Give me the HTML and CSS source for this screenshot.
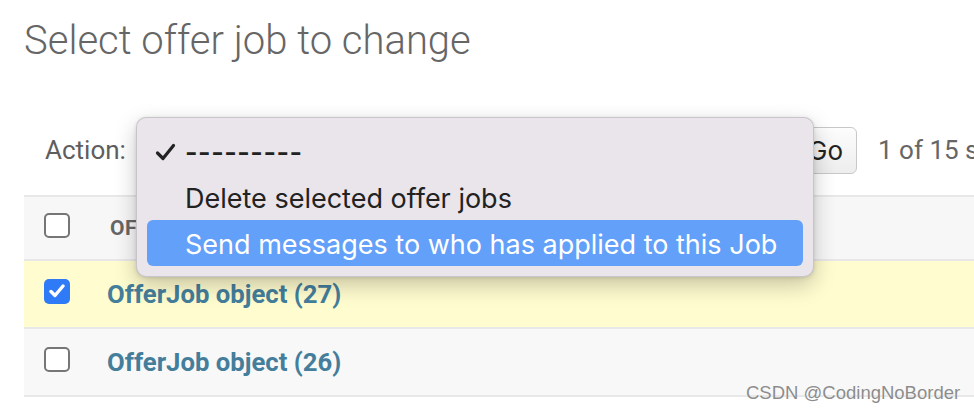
FILE: index.html
```html
<!DOCTYPE html>
<html>
<head>
<meta charset="utf-8">
<link rel="stylesheet" href="styles.css">
</head>
<body>
<div class="page">
  <h1 class="title">Select offer job to change</h1>
  <div class="actions">
    <span class="label">Action:</span>
    <div class="select-wrap">
      <div class="select"></div>
      <div class="menu">
        <div class="item"><svg class="tick" width="21" height="18" viewBox="0 0 21 18"><path d="M2.5 10 L8 15.5 L18.5 2.5" fill="none" stroke="#222" stroke-width="3.2" stroke-linecap="round" stroke-linejoin="round"/></svg><span class="dashes">---------</span></div>
        <div class="item">Delete selected offer jobs</div>
        <div class="item active">Send messages to who has applied to this Job</div>
      </div>
    </div>
    <button class="go">Go</button>
    <span class="counter">1 of 15 selected</span>
  </div>
  <div class="table">
    <div class="row head">
      <div class="cb-cell"><span class="cb"></span></div>
      <div class="col-title">OFFER JOB</div>
    </div>
    <div class="row selected">
      <div class="cb-cell"><span class="cb checked"><svg width="16" height="14" viewBox="0 0 16 14"><path d="M2 7.5 L6 11.5 L14 2" fill="none" stroke="#fff" stroke-width="3.4" stroke-linecap="round" stroke-linejoin="round"/></svg></span></div>
      <a class="link">OfferJob object (27)</a>
    </div>
    <div class="row alt">
      <div class="cb-cell"><span class="cb"></span></div>
      <a class="link">OfferJob object (26)</a>
    </div>
  </div>
</div>
<div class="watermark">CSDN @CodingNoBorder</div>
</body>
</html>
```

FILE: styles.css
```css
html, body {
  margin: 0;
  padding: 0;
  background: #fff;
  overflow: hidden;
}
body {
  width: 974px;
  height: 412px;
  position: relative;
  font-family: Roboto, "Liberation Sans", sans-serif;
}
.page {
  padding-left: 24px;
}
.title {
  margin: 17px 0 0 0;
  font-family: Roboto, sans-serif;
  font-weight: 300;
  font-size: 40px;
  line-height: 48px;
  color: #666;
  white-space: nowrap;
}
.actions {
  margin-top: 55px;
  height: 60px;
  display: flex;
  align-items: center;
  white-space: nowrap;
}
.actions > * {
  flex-shrink: 0;
}
.label {
  margin-left: 21px;
  width: 79px;
  font-size: 26px;
  color: #5e5e5e;
}
.select-wrap {
  position: relative;
  margin-left: 12px;
  width: 644px;
  height: 47px;
}
.select {
  height: 45px;
  border: 1px solid #ccc;
  border-radius: 6px;
  background: #fff;
}
.menu {
  position: absolute;
  left: 0;
  top: -10px;
  width: 656px;
  padding: 10px;
  background: #e9e5ea;
  border: 1px solid rgba(0, 0, 0, 0.14);
  border-radius: 10px;
  box-shadow: 0 8px 22px rgba(0, 0, 0, 0.22), 0 1px 4px rgba(0, 0, 0, 0.12);
  z-index: 5;
  font-family: Inter, sans-serif;
  font-size: 27px;
  color: #222;
}
.item {
  height: 46px;
  line-height: 49px;
  padding-left: 38px;
  border-radius: 6px;
  position: relative;
  white-space: nowrap;
}
.item.active {
  background: #63a0f9;
  color: #fff;
}
.tick {
  position: absolute;
  left: 8px;
  top: 15px;
}
.dashes {
  letter-spacing: 0.5px;
  font-weight: 600;
}
.go {
  margin-left: 11px;
  width: 66px;
  height: 47px;
  border: 1px solid #c8c8c8;
  border-radius: 6px;
  background: linear-gradient(#fdfdfd, #ededed);
  font-family: Inter, sans-serif;
  font-size: 26px;
  color: #222;
  padding: 0 0 0 16px;
  text-align: left;
}
.counter {
  margin-left: 21px;
  font-size: 26px;
  color: #666;
}
.table {
  margin-top: 15px;
  border-top: 2px solid #e8e8e8;
}
.row {
  display: flex;
  align-items: center;
  height: 66px;
  border-bottom: 2px solid #e8e8e8;
}
.row.head {
  height: 62px;
  background: #f7f7f7;
}
.row.selected {
  background: #fffccf;
}
.row.alt {
  background: #f8f8f8;
}
.cb-cell {
  width: 83px;
  padding-left: 20px;
  box-sizing: border-box;
  display: flex;
  align-items: center;
  margin-top: -6px;
}
.cb {
  width: 26px;
  height: 25px;
  box-sizing: border-box;
  border: 2px solid #767676;
  border-radius: 5px;
  background: #fff;
  display: flex;
  align-items: center;
  justify-content: center;
}
.cb.checked {
  border: none;
  background: #2f7af6;
}
.col-title {
  margin-left: 3px;
  font-weight: 700;
  font-size: 21px;
  color: #666;
  letter-spacing: 0.5px;
}
.link {
  font-weight: 700;
  font-size: 25.7px;
  color: #447e9b;
  text-decoration: none;
}
.watermark {
  position: absolute;
  left: 746px;
  top: 382px;
  font-family: "Liberation Sans", Arial, sans-serif;
  font-size: 18.5px;
  color: #8c8c8c;
  text-shadow: 0 0 1px #fff;
  white-space: nowrap;
}
```
